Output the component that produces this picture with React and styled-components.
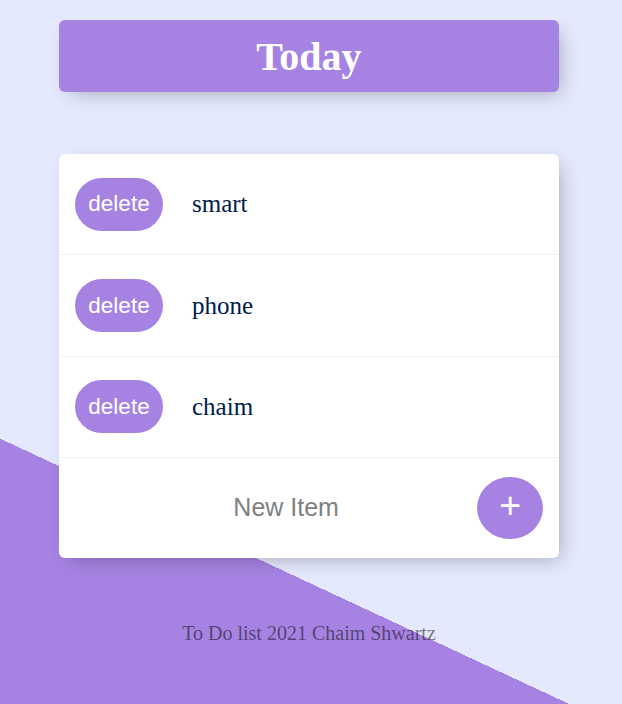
import styled, { createGlobalStyle } from 'styled-components';

const GlobalStyle = createGlobalStyle`
	html {
		height: 100%;
		background-color: #e4e9fd;
		background-image: linear-gradient(25deg, #a683e3 26.7%, #e4e9fd 26.7%);
		overflow: hidden;
	}
	body {
		margin: 20px 12px 8px 8px;
		font-family: 'Liberation Serif', 'Times New Roman', serif;
	}
`;

const Box = styled.div`
	width: 500px;
	margin: 0 auto;
	background: #fff;
	border-radius: 6px;
	box-shadow: 6px 6px 19px -6px rgba(0, 0, 0, 0.3);
`;

const Heading = styled(Box)`
	height: 72px;
	display: flex;
	align-items: center;
	justify-content: center;
	background-color: #a683e3;

	h1 {
		margin: 0;
		color: #fff;
		font-size: 40px;
		font-weight: bold;
	}
`;

const List = styled(Box)`
	margin-top: 62px;
`;

const Row = styled.div`
	min-height: 100.4px;
	display: flex;
	align-items: center;
	padding: 0 16px;
	border-bottom: 1px solid #f1f1f1;

	&:last-child {
		border-bottom: 0;
		min-height: 99.5px;
	}
`;

const DeleteBtn = styled.button`
	width: 88px;
	height: 53px;
	border: 0;
	border-radius: 27px;
	background-color: #a683e3;
	color: #fff;
	font-family: 'Liberation Sans', Arial, sans-serif;
	font-size: 22.5px;
	padding: 0;
	flex-shrink: 0;
`;

const ItemText = styled.p`
	margin: 0 0 0 29px;
	font-size: 25px;
	color: #00204a;
`;

const NewItem = styled.input`
	width: 380px;
	margin-left: 20px;
	height: 60px;
	border: none;
	background: transparent;
	text-align: center;
	font-family: 'Liberation Sans', Arial, sans-serif;
	font-size: 25px;
	&::placeholder {
		color: grey;
		opacity: 1;
	}
	&:focus {
		outline: none;
	}
`;

const AddBtn = styled.button`
	margin-left: auto;
	width: 66px;
	height: 62px;
	border: 0;
	border-radius: 50%;
	background-color: #a683e3;
	color: #fff;
	font-family: 'Liberation Sans', Arial, sans-serif;
	font-size: 37.5px;
	line-height: 1;
	padding: 0 0 4px;
`;

const Footer = styled.footer`
	margin-top: 64px;
	text-align: center;
	font-size: 20px;
	color: rgba(0, 0, 0, 0.5);
`;

const items = ['smart', 'phone', 'chaim'];

export default function App() {
	return (
		<>
			<GlobalStyle />
			<Heading>
				<h1>Today</h1>
			</Heading>
			<List>
				{items.map((item) => (
					<Row key={item}>
						<DeleteBtn>delete</DeleteBtn>
						<ItemText>{item}</ItemText>
					</Row>
				))}
				<Row>
					<NewItem type="text" placeholder="New Item" />
					<AddBtn>+</AddBtn>
				</Row>
			</List>
			<Footer>To Do list 2021 Chaim Shwartz</Footer>
		</>
	);
}
